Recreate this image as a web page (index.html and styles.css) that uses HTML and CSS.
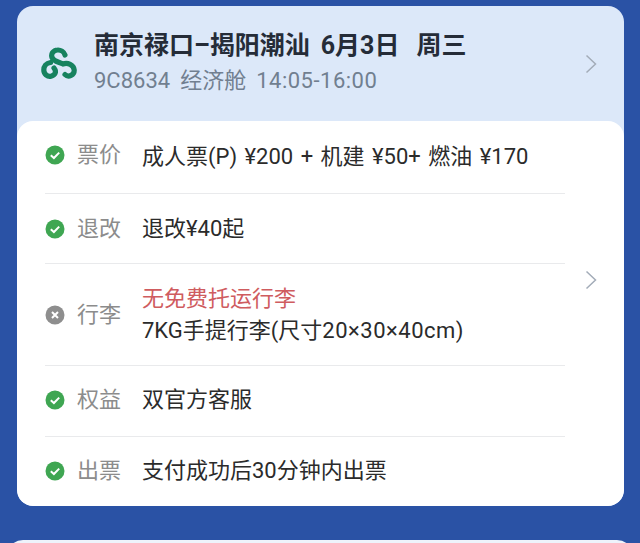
FILE: index.html
```html
<!DOCTYPE html>
<html lang="zh-CN">
<head>
    <meta charset="UTF-8">
    <meta name="viewport" content="width=device-width, initial-scale=1.0">
    <title>航班详情</title>
    <link rel="stylesheet" href="styles.css">
</head>
<body>
    <div class="card">
        <div class="flight">
            <svg class="logo" viewBox="0 0 36 34" fill="none" stroke="#17825f" stroke-width="5.200" stroke-linecap="round">
                <path d="M24 8C23 4.500 19.500 2.800 16.500 3C12 3.200 9.800 7 11 10.500C12.500 14.500 18 15 22 17C26.500 15.500 32.800 17.500 33.200 23C33.500 28 27.500 31 24 27.500"/>
                <path d="M9.500 15.500C5 16 2.800 19.500 2.800 23C2.800 27 6.500 30 10 29.200C14 28.300 16 25 13 21"/>
            </svg>
            <div class="flight-info">
                <div class="route"><span>南京禄口–揭阳潮汕</span><span>6月3日</span><span class="weekday">周三</span></div>
                <div class="meta"><span>9C8634</span><span>经济舱</span><span class="time">14:05-16:00</span></div>
            </div>
            <svg class="arrow" viewBox="0 0 12 20"><path d="M1.500 1.500L10.500 10L1.500 18.500"/></svg>
        </div>
        <div class="details">
            <div class="rows">
                <div class="row row-price">
                    <svg class="status" viewBox="0 0 20 20"><circle class="ok" cx="10" cy="10" r="9.500"/><path d="M5.800 10.200L8.900 13L14.200 7.600"/></svg>
                    <div class="label">票价</div>
                    <div class="value">成人票(P) ¥200 + 机建 ¥50+ 燃油 ¥170</div>
                </div>
                <div class="row row-refund">
                    <svg class="status" viewBox="0 0 20 20"><circle class="ok" cx="10" cy="10" r="9.500"/><path d="M5.800 10.200L8.900 13L14.200 7.600"/></svg>
                    <div class="label">退改</div>
                    <div class="value">退改¥40起</div>
                </div>
                <div class="row row-baggage">
                    <svg class="status" viewBox="0 0 20 20"><circle class="no" cx="10" cy="10" r="9.500"/><path d="M7 7L13 13M13 7L7 13"/></svg>
                    <div class="label">行李</div>
                    <div class="value">
                        <div class="warn">无免费托运行李</div>
                        <div>7KG手提行李(尺寸<span class="size">20×30×40cm</span>)</div>
                    </div>
                </div>
                <div class="row row-low">
                    <svg class="status" viewBox="0 0 20 20"><circle class="ok" cx="10" cy="10" r="9.500"/><path d="M5.800 10.200L8.900 13L14.200 7.600"/></svg>
                    <div class="label">权益</div>
                    <div class="value">双官方客服</div>
                </div>
                <div class="row row-low">
                    <svg class="status" viewBox="0 0 20 20"><circle class="ok" cx="10" cy="10" r="9.500"/><path d="M5.800 10.200L8.900 13L14.200 7.600"/></svg>
                    <div class="label">出票</div>
                    <div class="value">支付成功后30分钟内出票</div>
                </div>
            </div>
            <svg class="arrow arrow-details" viewBox="0 0 12 20"><path d="M1.500 1.500L10.500 10L1.500 18.500"/></svg>
        </div>
    </div>
    <div class="next-card"></div>
</body>
</html>
```

FILE: styles.css
```css
html, body {
    height: 100%;
}
body {
    margin: 0;
    padding: 6px 16px 0 17px;
    box-sizing: border-box;
    background: #2a52a5;
    overflow: hidden;
    font-family: Roboto, "Noto Sans CJK SC", sans-serif;
}
.card {
    background: #dce8f9;
    border-radius: 16px;
    overflow: hidden;
}
.flight {
    height: 115px;
    display: flex;
    align-items: center;
    padding: 0 27px 0 24px;
}
.logo {
    width: 36px;
    height: 34px;
    margin-right: 17px;
}
.flight-info {
    flex: 1;
    margin-top: -2px;
}
.route {
    display: flex;
    gap: 11px;
    font-size: 25px;
    line-height: 32px;
    font-weight: 700;
    color: #252c38;
    white-space: nowrap;
}
.weekday {
    margin-left: 6px;
}
.meta {
    display: flex;
    gap: 10px;
    margin-top: 4px;
    font-size: 22px;
    line-height: 30px;
    color: #717f90;
}
.time {
    letter-spacing: 0.5px;
}
.arrow {
    width: 12px;
    height: 20px;
    fill: none;
    stroke: #a3acb8;
    stroke-width: 1.500;
}
.details {
    background: #fff;
    border-radius: 16px;
    height: 385px;
    display: flex;
    padding: 0 27px 0 28px;
}
.rows {
    flex: 1;
    margin-right: 20px;
}
.arrow-details {
    margin-top: 149px;
}
.row {
    height: 70px;
    display: flex;
    align-items: center;
    border-bottom: 1px solid #e9eaec;
}
.row:last-child {
    border-bottom: 0;
}
.row-price {
    height: 72px;
}
.row-price .value {
    word-spacing: 2px;
}
.row-price .status,
.row-price .label {
    margin-top: -4px;
}
.row-refund {
    height: 69px;
}
.row-baggage {
    height: 101px;
}
.row-low {
    height: 68px;
    padding-bottom: 2px;
}
.status {
    width: 20px;
    height: 20px;
    margin-right: 12px;
    fill: none;
    stroke: #fff;
    stroke-width: 2;
    flex: none;
}
.status circle {
    stroke: none;
}
.status .ok {
    fill: #3fa652;
}
.status .no {
    fill: #8e8e8e;
}
.label {
    width: 65px;
    font-size: 22px;
    line-height: 32px;
    color: #8c8c8c;
    flex: none;
}
.value {
    font-size: 22px;
    line-height: 32px;
    color: #2b2b2b;
    white-space: nowrap;
}
.warn {
    color: #cf5c5f;
}
.size {
    letter-spacing: 0.5px;
}
.next-card {
    height: 30px;
    margin: 34px -9px 0 -10px;
    background: #eef3fb;
    border-radius: 16px 16px 0 0;
}
```
